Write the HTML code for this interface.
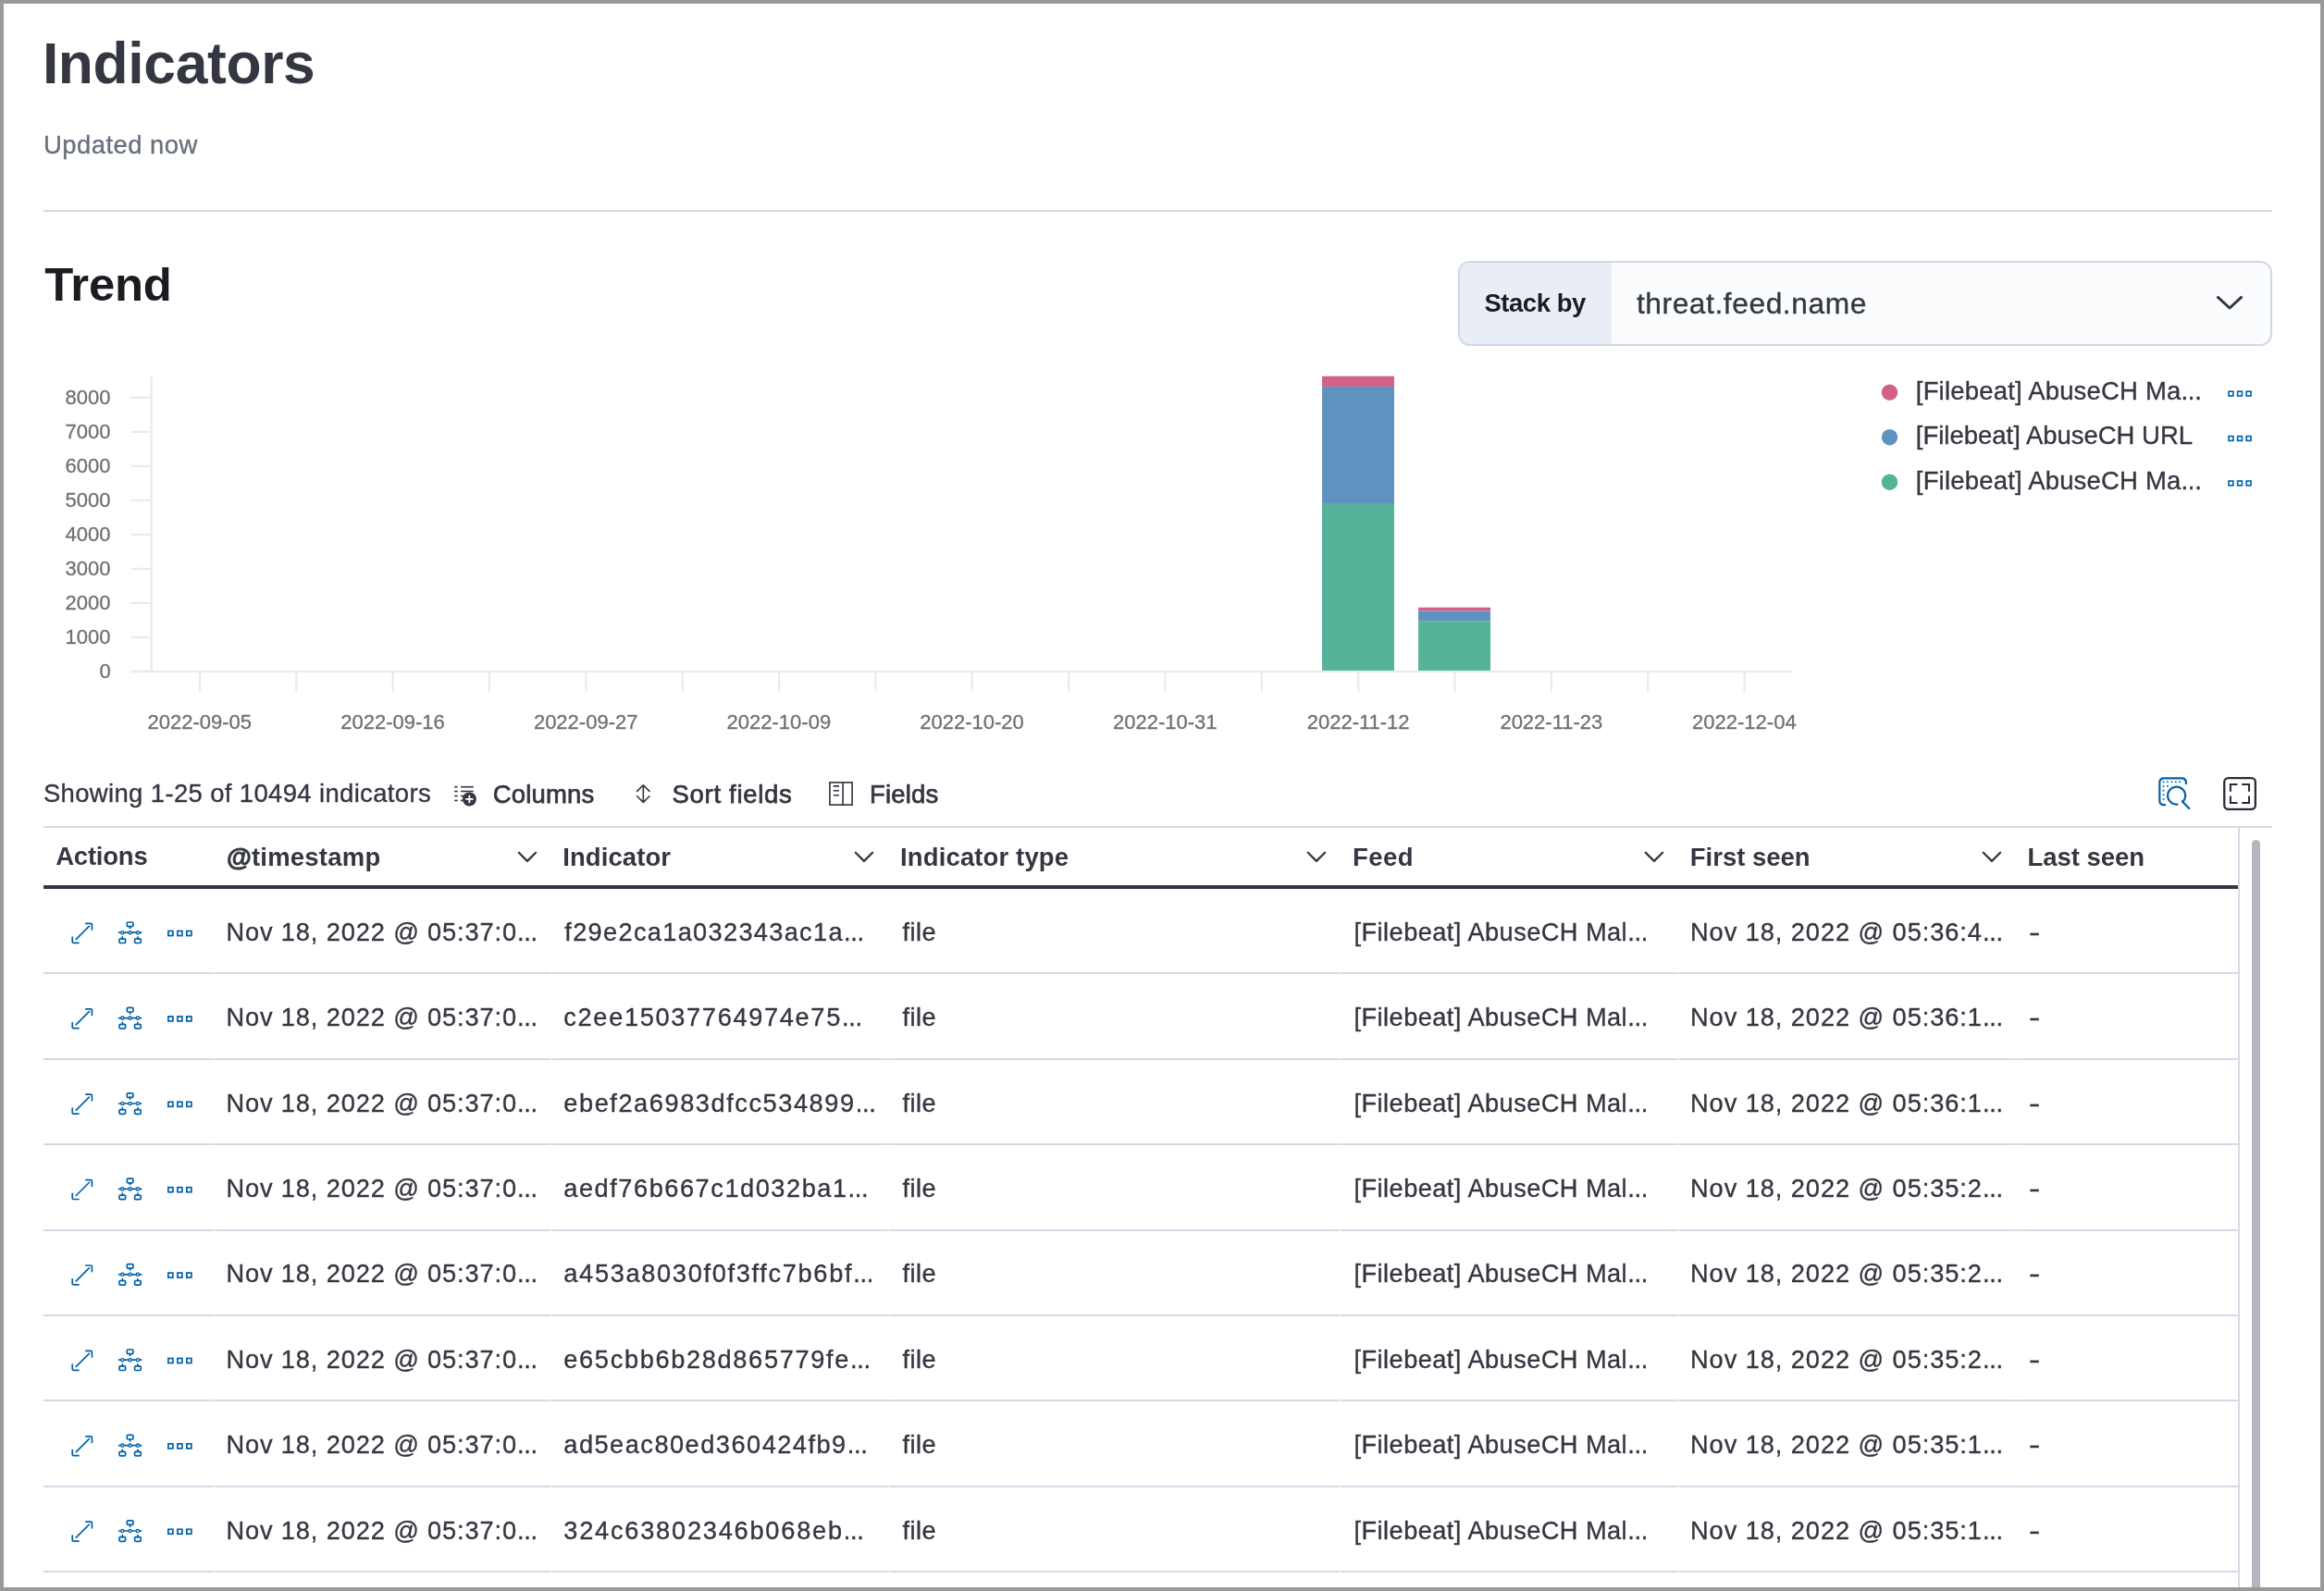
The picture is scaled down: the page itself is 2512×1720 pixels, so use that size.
<!DOCTYPE html>
<html lang="en"><head><meta charset="utf-8"><title>Indicators</title>
<style>
html,body{margin:0;padding:0;background:#fff}
body{width:2512px;height:1720px;overflow:hidden;position:relative;font-family:"Liberation Sans",sans-serif}
#frame{position:absolute;left:0;top:0;width:2512px;height:1720px;box-sizing:border-box;border:4px solid #999;pointer-events:none;z-index:5}
#g{position:absolute;left:0;top:0}
#tx{position:absolute;left:0;top:0;width:2512px;height:1720px;will-change:transform}
.t{position:absolute;white-space:pre;line-height:1;font-weight:400}
.r{-webkit-text-stroke:0.35px currentColor}
.m{-webkit-text-stroke:0.75px currentColor}
.a{-webkit-text-stroke:0.3px currentColor}
</style></head><body>
<svg id="g" width="2512" height="1720" viewBox="0 0 2512 1720">
<defs>
<g id="bx" fill="none" stroke="#0061a6" stroke-width="1.7"><rect x="0.85" y="-2.5" width="5" height="5"/><rect x="10.85" y="-2.5" width="5" height="5"/><rect x="20.85" y="-2.5" width="5" height="5"/></g>
<g id="rowic" fill="none" stroke="#0061a6" stroke-width="1.7" stroke-linecap="round" stroke-linejoin="round">
<path d="M92.8 998.4H98.2Q99.4 998.4 99.4 999.6V1005"/>
<path d="M78.2 1013.2V1018.1Q78.2 1019.3 79.4 1019.3H85"/>
<path d="M82.3 1015.3L96.3 1001.3"/>
<rect x="137.3" y="997" width="6.6" height="4.6" rx="1.2"/>
<path d="M140.6 1001.6V1003.4"/>
<path d="M128.6 1008.2H152.6"/>
<rect x="129" y="1014.9" width="6.6" height="4.6" rx="1.2"/>
<rect x="145.6" y="1014.9" width="6.6" height="4.6" rx="1.2"/>
<path d="M132.3 1012.9V1014.9M148.9 1012.9V1014.9"/>
<circle cx="132.3" cy="1008.2" r="1.6" fill="#fff" stroke-width="1.4"/><circle cx="140.6" cy="1008.2" r="1.6" fill="#fff" stroke-width="1.4"/><circle cx="148.9" cy="1008.2" r="1.6" fill="#fff" stroke-width="1.4"/>
</g>
<path id="chev" d="M1.2 1.1L10.35 10.2L19.5 1.1" fill="none" stroke="#343741" stroke-width="2.3" stroke-linecap="round" stroke-linejoin="round"/>
<clipPath id="sbclip"><rect x="1578" y="284" width="876" height="88" rx="11"/></clipPath>
</defs>
<rect x="47" y="227" width="2409" height="2" fill="#d3dae6"/>
<rect x="1576" y="282" width="880" height="92" rx="13" fill="#d0d6e8"/>
<g clip-path="url(#sbclip)"><rect x="1578" y="284" width="876" height="88" fill="#fbfcfd"/><rect x="1578" y="284" width="164" height="88" fill="#e9edf6"/></g>
<path d="M2397.4 321.4L2410 333L2422.6 321.4" fill="none" stroke="#343741" stroke-width="3" stroke-linecap="round" stroke-linejoin="round"/>
<circle cx="2042.5" cy="424.2" r="8.7" fill="#d36086"/>
<use href="#bx" transform="translate(2408.2 425.6) scale(0.96)"/>
<circle cx="2042.5" cy="472.7" r="8.7" fill="#6092c0"/>
<use href="#bx" transform="translate(2408.2 474.0) scale(0.96)"/>
<circle cx="2042.5" cy="521.2" r="8.7" fill="#54b399"/>
<use href="#bx" transform="translate(2408.2 522.4) scale(0.96)"/>
<g fill="#eaeaea">
<rect x="162.5" y="406.9" width="2.2" height="320.2"/>
<rect x="141.6" y="724.9" width="1795.4" height="2.2"/>
<rect x="141.6" y="724.80" width="21" height="2.2"/>
<rect x="141.6" y="687.80" width="21" height="2.2"/>
<rect x="141.6" y="650.80" width="21" height="2.2"/>
<rect x="141.6" y="613.80" width="21" height="2.2"/>
<rect x="141.6" y="576.80" width="21" height="2.2"/>
<rect x="141.6" y="539.80" width="21" height="2.2"/>
<rect x="141.6" y="502.80" width="21" height="2.2"/>
<rect x="141.6" y="465.80" width="21" height="2.2"/>
<rect x="141.6" y="428.80" width="21" height="2.2"/>
<rect x="214.90" y="727" width="2.2" height="20.7"/>
<rect x="319.25" y="727" width="2.2" height="20.7"/>
<rect x="423.60" y="727" width="2.2" height="20.7"/>
<rect x="527.95" y="727" width="2.2" height="20.7"/>
<rect x="632.30" y="727" width="2.2" height="20.7"/>
<rect x="736.65" y="727" width="2.2" height="20.7"/>
<rect x="841.00" y="727" width="2.2" height="20.7"/>
<rect x="945.35" y="727" width="2.2" height="20.7"/>
<rect x="1049.70" y="727" width="2.2" height="20.7"/>
<rect x="1154.05" y="727" width="2.2" height="20.7"/>
<rect x="1258.40" y="727" width="2.2" height="20.7"/>
<rect x="1362.75" y="727" width="2.2" height="20.7"/>
<rect x="1467.10" y="727" width="2.2" height="20.7"/>
<rect x="1571.45" y="727" width="2.2" height="20.7"/>
<rect x="1675.80" y="727" width="2.2" height="20.7"/>
<rect x="1780.15" y="727" width="2.2" height="20.7"/>
<rect x="1884.50" y="727" width="2.2" height="20.7"/>
</g>
<rect x="1429.0" y="406.7" width="78.0" height="11.2" fill="#d36086"/>
<rect x="1429.0" y="417.9" width="78.0" height="126.1" fill="#6092c0"/>
<rect x="1429.0" y="544.0" width="78.0" height="180.9" fill="#54b399"/>
<rect x="1533.0" y="656.7" width="78.0" height="3.8" fill="#d36086"/>
<rect x="1533.0" y="660.5" width="78.0" height="11.2" fill="#6092c0"/>
<rect x="1533.0" y="671.7" width="78.0" height="53.2" fill="#54b399"/>
<g fill="#343741">
<rect x="491.2" y="849.9" width="3.5" height="1.6"/>
<rect x="491.2" y="854.7" width="3.5" height="1.6"/>
<rect x="491.2" y="859.7" width="3.5" height="1.6"/>
<rect x="491.2" y="864.6" width="3.5" height="1.6"/>
<rect x="498" y="849.9" width="13.8" height="1.6"/><rect x="498" y="854.7" width="13.8" height="1.6"/><rect x="498" y="859.7" width="3" height="1.6"/><rect x="498" y="864.6" width="2" height="1.6"/>
<circle cx="507.4" cy="863.9" r="7.5"/>
<rect x="503.2" y="863" width="8.4" height="1.8" fill="#fff"/><rect x="506.5" y="859.7" width="1.8" height="8.4" fill="#fff"/>
</g>
<g fill="none" stroke="#343741" stroke-width="1.6" stroke-linecap="round" stroke-linejoin="round">
<path d="M695.3 849.4V866.8M688.6 855.4L695.3 848.8L702 855.4M688.6 860.8L695.3 867.4L702 860.8"/>
</g>
<g fill="none" stroke="#343741" stroke-width="1.65">
<rect x="896.9" y="845.9" width="24.2" height="24.2"/><path d="M911.1 846V870M900.8 849.8H907M900.8 854.7H907M900.8 859.7H907"/>
</g>
<g fill="none" stroke="#0061a6" stroke-width="2.2" stroke-linecap="round" stroke-linejoin="round">
<path d="M2340.2 870.2H2339Q2334.3 870.2 2334.3 865.5V846.1Q2334.3 841.4 2339 841.4H2358.2Q2362.9 841.4 2362.9 846.1V847.2"/>
<path d="M2359.32 866.82A9.5 9.5 0 1 0 2353.4 869.56"/><path d="M2358.9 866.4L2366.3 874"/>
</g>
<g fill="#0061a6">
<rect x="2337.7" y="844.4" width="1.7" height="1.7"/>
<rect x="2342.1" y="844.4" width="1.7" height="1.7"/>
<rect x="2346.6" y="844.4" width="1.7" height="1.7"/>
<rect x="2350.9" y="844.4" width="1.7" height="1.7"/>
<rect x="2355.2" y="844.4" width="1.7" height="1.7"/>
<rect x="2337.65" y="849.1" width="1.7" height="1.7"/>
<rect x="2337.65" y="853.8" width="1.7" height="1.7"/>
<rect x="2337.65" y="858.4" width="1.7" height="1.7"/>
<rect x="2337.65" y="863.0" width="1.7" height="1.7"/>
<rect x="2342.05" y="849.15" width="1.7" height="1.7"/>
</g>
<g fill="none" stroke="#2b2d36" stroke-width="2.3" stroke-linejoin="round">
<rect x="2404.25" y="841.1" width="33.6" height="33.8" rx="4.4"/>
<path d="M2410.9 855.7V847.9H2418.5M2423.2 847.9H2431V855.7M2410.9 860.4V868H2418.5M2423.2 868H2431V860.4" stroke-width="2.05" stroke-linejoin="miter"/>
</g>
<rect x="47" y="893" width="2409" height="2" fill="#d3dae6"/>
<use href="#chev" x="559.6" y="920.7"/>
<use href="#chev" x="923.6" y="920.7"/>
<use href="#chev" x="1412.6" y="920.7"/>
<use href="#chev" x="1777.6" y="920.7"/>
<use href="#chev" x="2142.6" y="920.7"/>
<rect x="47" y="957" width="2372" height="4" fill="#343741"/>
<rect x="2419" y="895" width="2" height="821" fill="#d3dae6"/>
<rect x="47" y="1051.00" width="2372" height="2" fill="#d3dae6"/>
<rect x="230.4" y="1051.00" width="1.2" height="2" fill="#fff" fill-opacity="0.75"/>
<rect x="595.4" y="1051.00" width="1.2" height="2" fill="#fff" fill-opacity="0.75"/>
<rect x="959.4" y="1051.00" width="1.2" height="2" fill="#fff" fill-opacity="0.75"/>
<rect x="1448.4" y="1051.00" width="1.2" height="2" fill="#fff" fill-opacity="0.75"/>
<rect x="1813.4" y="1051.00" width="1.2" height="2" fill="#fff" fill-opacity="0.75"/>
<rect x="2178.4" y="1051.00" width="1.2" height="2" fill="#fff" fill-opacity="0.75"/>
<use href="#rowic" y="0.00"/>
<use href="#bx" x="181" y="1009.00"/>
<rect x="47" y="1144.00" width="2372" height="2" fill="#d3dae6"/>
<rect x="230.4" y="1144.00" width="1.2" height="2" fill="#fff" fill-opacity="0.75"/>
<rect x="595.4" y="1144.00" width="1.2" height="2" fill="#fff" fill-opacity="0.75"/>
<rect x="959.4" y="1144.00" width="1.2" height="2" fill="#fff" fill-opacity="0.75"/>
<rect x="1448.4" y="1144.00" width="1.2" height="2" fill="#fff" fill-opacity="0.75"/>
<rect x="1813.4" y="1144.00" width="1.2" height="2" fill="#fff" fill-opacity="0.75"/>
<rect x="2178.4" y="1144.00" width="1.2" height="2" fill="#fff" fill-opacity="0.75"/>
<use href="#rowic" y="92.40"/>
<use href="#bx" x="181" y="1101.40"/>
<rect x="47" y="1236.00" width="2372" height="2" fill="#d3dae6"/>
<rect x="230.4" y="1236.00" width="1.2" height="2" fill="#fff" fill-opacity="0.75"/>
<rect x="595.4" y="1236.00" width="1.2" height="2" fill="#fff" fill-opacity="0.75"/>
<rect x="959.4" y="1236.00" width="1.2" height="2" fill="#fff" fill-opacity="0.75"/>
<rect x="1448.4" y="1236.00" width="1.2" height="2" fill="#fff" fill-opacity="0.75"/>
<rect x="1813.4" y="1236.00" width="1.2" height="2" fill="#fff" fill-opacity="0.75"/>
<rect x="2178.4" y="1236.00" width="1.2" height="2" fill="#fff" fill-opacity="0.75"/>
<use href="#rowic" y="184.80"/>
<use href="#bx" x="181" y="1193.80"/>
<rect x="47" y="1329.00" width="2372" height="2" fill="#d3dae6"/>
<rect x="230.4" y="1329.00" width="1.2" height="2" fill="#fff" fill-opacity="0.75"/>
<rect x="595.4" y="1329.00" width="1.2" height="2" fill="#fff" fill-opacity="0.75"/>
<rect x="959.4" y="1329.00" width="1.2" height="2" fill="#fff" fill-opacity="0.75"/>
<rect x="1448.4" y="1329.00" width="1.2" height="2" fill="#fff" fill-opacity="0.75"/>
<rect x="1813.4" y="1329.00" width="1.2" height="2" fill="#fff" fill-opacity="0.75"/>
<rect x="2178.4" y="1329.00" width="1.2" height="2" fill="#fff" fill-opacity="0.75"/>
<use href="#rowic" y="277.20"/>
<use href="#bx" x="181" y="1286.20"/>
<rect x="47" y="1421.00" width="2372" height="2" fill="#d3dae6"/>
<rect x="230.4" y="1421.00" width="1.2" height="2" fill="#fff" fill-opacity="0.75"/>
<rect x="595.4" y="1421.00" width="1.2" height="2" fill="#fff" fill-opacity="0.75"/>
<rect x="959.4" y="1421.00" width="1.2" height="2" fill="#fff" fill-opacity="0.75"/>
<rect x="1448.4" y="1421.00" width="1.2" height="2" fill="#fff" fill-opacity="0.75"/>
<rect x="1813.4" y="1421.00" width="1.2" height="2" fill="#fff" fill-opacity="0.75"/>
<rect x="2178.4" y="1421.00" width="1.2" height="2" fill="#fff" fill-opacity="0.75"/>
<use href="#rowic" y="369.60"/>
<use href="#bx" x="181" y="1378.60"/>
<rect x="47" y="1513.00" width="2372" height="2" fill="#d3dae6"/>
<rect x="230.4" y="1513.00" width="1.2" height="2" fill="#fff" fill-opacity="0.75"/>
<rect x="595.4" y="1513.00" width="1.2" height="2" fill="#fff" fill-opacity="0.75"/>
<rect x="959.4" y="1513.00" width="1.2" height="2" fill="#fff" fill-opacity="0.75"/>
<rect x="1448.4" y="1513.00" width="1.2" height="2" fill="#fff" fill-opacity="0.75"/>
<rect x="1813.4" y="1513.00" width="1.2" height="2" fill="#fff" fill-opacity="0.75"/>
<rect x="2178.4" y="1513.00" width="1.2" height="2" fill="#fff" fill-opacity="0.75"/>
<use href="#rowic" y="462.00"/>
<use href="#bx" x="181" y="1471.00"/>
<rect x="47" y="1606.00" width="2372" height="2" fill="#d3dae6"/>
<rect x="230.4" y="1606.00" width="1.2" height="2" fill="#fff" fill-opacity="0.75"/>
<rect x="595.4" y="1606.00" width="1.2" height="2" fill="#fff" fill-opacity="0.75"/>
<rect x="959.4" y="1606.00" width="1.2" height="2" fill="#fff" fill-opacity="0.75"/>
<rect x="1448.4" y="1606.00" width="1.2" height="2" fill="#fff" fill-opacity="0.75"/>
<rect x="1813.4" y="1606.00" width="1.2" height="2" fill="#fff" fill-opacity="0.75"/>
<rect x="2178.4" y="1606.00" width="1.2" height="2" fill="#fff" fill-opacity="0.75"/>
<use href="#rowic" y="554.40"/>
<use href="#bx" x="181" y="1563.40"/>
<rect x="47" y="1698.00" width="2372" height="2" fill="#d3dae6"/>
<rect x="230.4" y="1698.00" width="1.2" height="2" fill="#fff" fill-opacity="0.75"/>
<rect x="595.4" y="1698.00" width="1.2" height="2" fill="#fff" fill-opacity="0.75"/>
<rect x="959.4" y="1698.00" width="1.2" height="2" fill="#fff" fill-opacity="0.75"/>
<rect x="1448.4" y="1698.00" width="1.2" height="2" fill="#fff" fill-opacity="0.75"/>
<rect x="1813.4" y="1698.00" width="1.2" height="2" fill="#fff" fill-opacity="0.75"/>
<rect x="2178.4" y="1698.00" width="1.2" height="2" fill="#fff" fill-opacity="0.75"/>
<use href="#rowic" y="646.80"/>
<use href="#bx" x="181" y="1655.80"/>
<path d="M2434 1716V912.5A4.5 4.5 0 0 1 2443 912.5V1716Z" fill="#b2b6c0"/>
</svg>
<div id="tx">
<span class="t" style="left:45.90px;top:37.79px;font-size:62.37px;font-weight:700;color:#343741;letter-spacing:-0.344px;">Indicators</span>
<span class="t r" style="left:47.00px;top:142.66px;font-size:27.46px;color:#69707d;letter-spacing:0.450px;">Updated now</span>
<span class="t" style="left:48.30px;top:283.00px;font-size:50.82px;font-weight:700;color:#1a1c21;letter-spacing:-0.200px;">Trend</span>
<span class="t" style="left:1604.40px;top:313.66px;font-size:27.46px;font-weight:700;color:#1a1c21;letter-spacing:-0.429px;">Stack by</span>
<span class="t r" style="left:1768.90px;top:312.84px;font-size:31.72px;color:#343741;letter-spacing:0.573px;">threat.feed.name</span>
<span class="t r" style="left:2070.80px;top:408.66px;font-size:27.46px;color:#343741;letter-spacing:0.210px;">[Filebeat] AbuseCH Ma<span style="letter-spacing:-0.3px">...</span></span>
<span class="t r" style="left:2070.80px;top:457.16px;font-size:27.46px;color:#343741;letter-spacing:0.005px;">[Filebeat] AbuseCH URL</span>
<span class="t r" style="left:2070.80px;top:505.66px;font-size:27.46px;color:#343741;letter-spacing:0.210px;">[Filebeat] AbuseCH Ma<span style="letter-spacing:-0.3px">...</span></span>
<span class="t a" style="left:107.60px;top:714.90px;font-size:22.00px;color:#707070;">0</span>
<span class="t a" style="left:70.60px;top:677.90px;font-size:22.00px;color:#707070;">1000</span>
<span class="t a" style="left:70.60px;top:640.90px;font-size:22.00px;color:#707070;">2000</span>
<span class="t a" style="left:70.60px;top:603.90px;font-size:22.00px;color:#707070;">3000</span>
<span class="t a" style="left:70.60px;top:566.90px;font-size:22.00px;color:#707070;">4000</span>
<span class="t a" style="left:70.60px;top:529.90px;font-size:22.00px;color:#707070;">5000</span>
<span class="t a" style="left:70.60px;top:492.90px;font-size:22.00px;color:#707070;">6000</span>
<span class="t a" style="left:70.60px;top:455.90px;font-size:22.00px;color:#707070;">7000</span>
<span class="t a" style="left:70.60px;top:418.90px;font-size:22.00px;color:#707070;">8000</span>
<span class="t a" style="left:159.50px;top:769.90px;font-size:22.00px;color:#707070;">2022-09-05</span>
<span class="t a" style="left:368.20px;top:769.90px;font-size:22.00px;color:#707070;">2022-09-16</span>
<span class="t a" style="left:576.90px;top:769.90px;font-size:22.00px;color:#707070;">2022-09-27</span>
<span class="t a" style="left:785.60px;top:769.90px;font-size:22.00px;color:#707070;">2022-10-09</span>
<span class="t a" style="left:994.30px;top:769.90px;font-size:22.00px;color:#707070;">2022-10-20</span>
<span class="t a" style="left:1203.00px;top:769.90px;font-size:22.00px;color:#707070;">2022-10-31</span>
<span class="t a" style="left:1412.70px;top:769.90px;font-size:22.00px;color:#707070;">2022-11-12</span>
<span class="t a" style="left:1621.40px;top:769.90px;font-size:22.00px;color:#707070;">2022-11-23</span>
<span class="t a" style="left:1829.10px;top:769.90px;font-size:22.00px;color:#707070;">2022-12-04</span>
<span class="t r" style="left:46.90px;top:843.66px;font-size:27.46px;color:#343741;letter-spacing:0.365px;">Showing 1-25 of 10494 indicators</span>
<span class="t m" style="left:532.70px;top:844.86px;font-size:27.46px;color:#343741;letter-spacing:0.217px;">Columns</span>
<span class="t m" style="left:726.60px;top:844.86px;font-size:27.46px;color:#343741;letter-spacing:0.710px;">Sort fields</span>
<span class="t m" style="left:940.10px;top:844.86px;font-size:27.46px;color:#343741;letter-spacing:0.160px;">Fields</span>
<span class="t" style="left:60.20px;top:911.66px;font-size:27.46px;font-weight:700;color:#343741;letter-spacing:-0.200px;">Actions</span>
<span class="t" style="left:244.90px;top:912.76px;font-size:27.46px;font-weight:700;color:#343741;letter-spacing:0.244px;"><span style="-webkit-text-stroke:0.9px currentColor">@</span>timestamp</span>
<span class="t" style="left:608.20px;top:912.76px;font-size:27.46px;font-weight:700;color:#343741;letter-spacing:0.112px;">Indicator</span>
<span class="t" style="left:973.10px;top:912.76px;font-size:27.46px;font-weight:700;color:#343741;letter-spacing:0.146px;">Indicator type</span>
<span class="t" style="left:1462.00px;top:912.76px;font-size:27.46px;font-weight:700;color:#343741;letter-spacing:0.500px;">Feed</span>
<span class="t" style="left:1826.80px;top:912.76px;font-size:27.46px;font-weight:700;color:#343741;">First seen</span>
<span class="t" style="left:2191.50px;top:912.76px;font-size:27.46px;font-weight:700;color:#343741;letter-spacing:-0.012px;">Last seen</span>
<span class="t r" style="left:244.40px;top:993.79px;font-size:27.19px;color:#343741;letter-spacing:0.882px;">Nov 18, 2022 @ 05:37:0<span style="letter-spacing:-0.3px">...</span></span>
<span class="t r" style="left:610.30px;top:993.79px;font-size:27.19px;color:#343741;letter-spacing:1.311px;">f29e2ca1a032343ac1a<span style="letter-spacing:-0.3px">...</span></span>
<span class="t r" style="left:975.50px;top:993.79px;font-size:27.19px;color:#343741;letter-spacing:0.467px;">file</span>
<span class="t r" style="left:1463.50px;top:993.79px;font-size:27.19px;color:#343741;letter-spacing:0.455px;">[Filebeat] AbuseCH Mal<span style="letter-spacing:-0.3px">...</span></span>
<span class="t r" style="left:1827.00px;top:993.79px;font-size:27.19px;color:#343741;letter-spacing:0.945px;">Nov 18, 2022 @ 05:36:4<span style="letter-spacing:-0.3px">...</span></span>
<span class="t r" style="left:2193.06px;top:993.79px;font-size:27.19px;color:#343741;transform-origin:0 0;transform:scaleX(1.343);">-</span>
<span class="t r" style="left:244.40px;top:1086.19px;font-size:27.19px;color:#343741;letter-spacing:0.882px;">Nov 18, 2022 @ 05:37:0<span style="letter-spacing:-0.3px">...</span></span>
<span class="t r" style="left:609.30px;top:1086.19px;font-size:27.19px;color:#343741;letter-spacing:1.667px;">c2ee15037764974e75<span style="letter-spacing:-0.3px">...</span></span>
<span class="t r" style="left:975.50px;top:1086.19px;font-size:27.19px;color:#343741;letter-spacing:0.467px;">file</span>
<span class="t r" style="left:1463.50px;top:1086.19px;font-size:27.19px;color:#343741;letter-spacing:0.455px;">[Filebeat] AbuseCH Mal<span style="letter-spacing:-0.3px">...</span></span>
<span class="t r" style="left:1827.00px;top:1086.19px;font-size:27.19px;color:#343741;letter-spacing:0.945px;">Nov 18, 2022 @ 05:36:1<span style="letter-spacing:-0.3px">...</span></span>
<span class="t r" style="left:2193.06px;top:1086.19px;font-size:27.19px;color:#343741;transform-origin:0 0;transform:scaleX(1.343);">-</span>
<span class="t r" style="left:244.40px;top:1178.59px;font-size:27.19px;color:#343741;letter-spacing:0.882px;">Nov 18, 2022 @ 05:37:0<span style="letter-spacing:-0.3px">...</span></span>
<span class="t r" style="left:609.30px;top:1178.59px;font-size:27.19px;color:#343741;letter-spacing:1.555px;">ebef2a6983dfcc534899<span style="letter-spacing:-0.3px">...</span></span>
<span class="t r" style="left:975.50px;top:1178.59px;font-size:27.19px;color:#343741;letter-spacing:0.467px;">file</span>
<span class="t r" style="left:1463.50px;top:1178.59px;font-size:27.19px;color:#343741;letter-spacing:0.455px;">[Filebeat] AbuseCH Mal<span style="letter-spacing:-0.3px">...</span></span>
<span class="t r" style="left:1827.00px;top:1178.59px;font-size:27.19px;color:#343741;letter-spacing:0.945px;">Nov 18, 2022 @ 05:36:1<span style="letter-spacing:-0.3px">...</span></span>
<span class="t r" style="left:2193.06px;top:1178.59px;font-size:27.19px;color:#343741;transform-origin:0 0;transform:scaleX(1.343);">-</span>
<span class="t r" style="left:244.40px;top:1270.99px;font-size:27.19px;color:#343741;letter-spacing:0.882px;">Nov 18, 2022 @ 05:37:0<span style="letter-spacing:-0.3px">...</span></span>
<span class="t r" style="left:609.30px;top:1270.99px;font-size:27.19px;color:#343741;letter-spacing:1.532px;">aedf76b667c1d032ba1<span style="letter-spacing:-0.3px">...</span></span>
<span class="t r" style="left:975.50px;top:1270.99px;font-size:27.19px;color:#343741;letter-spacing:0.467px;">file</span>
<span class="t r" style="left:1463.50px;top:1270.99px;font-size:27.19px;color:#343741;letter-spacing:0.455px;">[Filebeat] AbuseCH Mal<span style="letter-spacing:-0.3px">...</span></span>
<span class="t r" style="left:1827.00px;top:1270.99px;font-size:27.19px;color:#343741;letter-spacing:0.945px;">Nov 18, 2022 @ 05:35:2<span style="letter-spacing:-0.3px">...</span></span>
<span class="t r" style="left:2193.06px;top:1270.99px;font-size:27.19px;color:#343741;transform-origin:0 0;transform:scaleX(1.343);">-</span>
<span class="t r" style="left:244.40px;top:1363.39px;font-size:27.19px;color:#343741;letter-spacing:0.882px;">Nov 18, 2022 @ 05:37:0<span style="letter-spacing:-0.3px">...</span></span>
<span class="t r" style="left:609.30px;top:1363.39px;font-size:27.19px;color:#343741;letter-spacing:1.676px;">a453a8030f0f3ffc7b6bf<span style="letter-spacing:-0.3px">...</span></span>
<span class="t r" style="left:975.50px;top:1363.39px;font-size:27.19px;color:#343741;letter-spacing:0.467px;">file</span>
<span class="t r" style="left:1463.50px;top:1363.39px;font-size:27.19px;color:#343741;letter-spacing:0.455px;">[Filebeat] AbuseCH Mal<span style="letter-spacing:-0.3px">...</span></span>
<span class="t r" style="left:1827.00px;top:1363.39px;font-size:27.19px;color:#343741;letter-spacing:0.945px;">Nov 18, 2022 @ 05:35:2<span style="letter-spacing:-0.3px">...</span></span>
<span class="t r" style="left:2193.06px;top:1363.39px;font-size:27.19px;color:#343741;transform-origin:0 0;transform:scaleX(1.343);">-</span>
<span class="t r" style="left:244.40px;top:1455.79px;font-size:27.19px;color:#343741;letter-spacing:0.882px;">Nov 18, 2022 @ 05:37:0<span style="letter-spacing:-0.3px">...</span></span>
<span class="t r" style="left:609.30px;top:1455.79px;font-size:27.19px;color:#343741;letter-spacing:1.658px;">e65cbb6b28d865779fe<span style="letter-spacing:-0.3px">...</span></span>
<span class="t r" style="left:975.50px;top:1455.79px;font-size:27.19px;color:#343741;letter-spacing:0.467px;">file</span>
<span class="t r" style="left:1463.50px;top:1455.79px;font-size:27.19px;color:#343741;letter-spacing:0.455px;">[Filebeat] AbuseCH Mal<span style="letter-spacing:-0.3px">...</span></span>
<span class="t r" style="left:1827.00px;top:1455.79px;font-size:27.19px;color:#343741;letter-spacing:0.945px;">Nov 18, 2022 @ 05:35:2<span style="letter-spacing:-0.3px">...</span></span>
<span class="t r" style="left:2193.06px;top:1455.79px;font-size:27.19px;color:#343741;transform-origin:0 0;transform:scaleX(1.343);">-</span>
<span class="t r" style="left:244.40px;top:1548.19px;font-size:27.19px;color:#343741;letter-spacing:0.882px;">Nov 18, 2022 @ 05:37:0<span style="letter-spacing:-0.3px">...</span></span>
<span class="t r" style="left:609.30px;top:1548.19px;font-size:27.19px;color:#343741;letter-spacing:1.484px;">ad5eac80ed360424fb9<span style="letter-spacing:-0.3px">...</span></span>
<span class="t r" style="left:975.50px;top:1548.19px;font-size:27.19px;color:#343741;letter-spacing:0.467px;">file</span>
<span class="t r" style="left:1463.50px;top:1548.19px;font-size:27.19px;color:#343741;letter-spacing:0.455px;">[Filebeat] AbuseCH Mal<span style="letter-spacing:-0.3px">...</span></span>
<span class="t r" style="left:1827.00px;top:1548.19px;font-size:27.19px;color:#343741;letter-spacing:0.945px;">Nov 18, 2022 @ 05:35:1<span style="letter-spacing:-0.3px">...</span></span>
<span class="t r" style="left:2193.06px;top:1548.19px;font-size:27.19px;color:#343741;transform-origin:0 0;transform:scaleX(1.343);">-</span>
<span class="t r" style="left:244.40px;top:1640.59px;font-size:27.19px;color:#343741;letter-spacing:0.882px;">Nov 18, 2022 @ 05:37:0<span style="letter-spacing:-0.3px">...</span></span>
<span class="t r" style="left:609.30px;top:1640.59px;font-size:27.19px;color:#343741;letter-spacing:1.772px;">324c63802346b068eb<span style="letter-spacing:-0.3px">...</span></span>
<span class="t r" style="left:975.50px;top:1640.59px;font-size:27.19px;color:#343741;letter-spacing:0.467px;">file</span>
<span class="t r" style="left:1463.50px;top:1640.59px;font-size:27.19px;color:#343741;letter-spacing:0.455px;">[Filebeat] AbuseCH Mal<span style="letter-spacing:-0.3px">...</span></span>
<span class="t r" style="left:1827.00px;top:1640.59px;font-size:27.19px;color:#343741;letter-spacing:0.945px;">Nov 18, 2022 @ 05:35:1<span style="letter-spacing:-0.3px">...</span></span>
<span class="t r" style="left:2193.06px;top:1640.59px;font-size:27.19px;color:#343741;transform-origin:0 0;transform:scaleX(1.343);">-</span>
</div>
<div id="frame"></div>
</body></html>
